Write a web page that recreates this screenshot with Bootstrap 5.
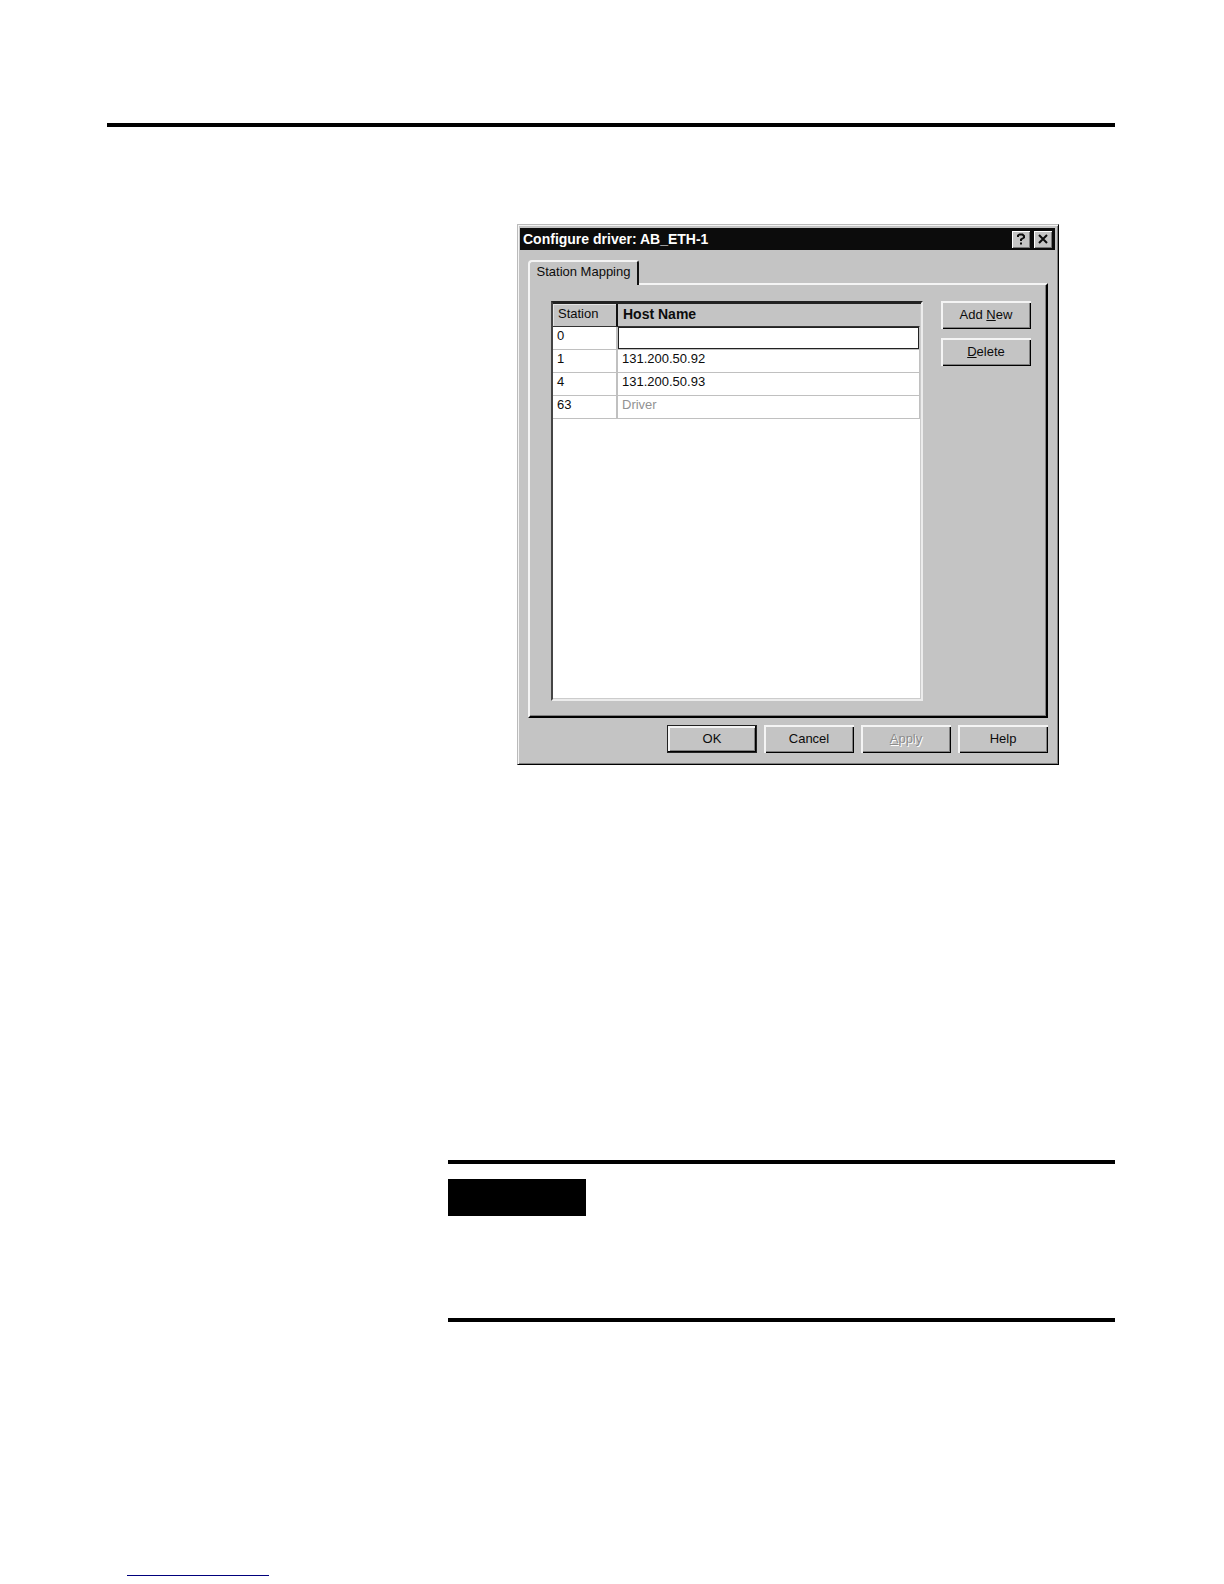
<!DOCTYPE html>
<html lang="en">
<head>
<meta charset="utf-8">
<meta name="viewport" content="width=device-width, initial-scale=1">
<title>Configure driver: AB_ETH-1</title>
<link rel="stylesheet" href="https://cdn.jsdelivr.net/npm/bootstrap@5.3.0/dist/css/bootstrap.min.css">
<style>
  :root { --face: #c4c4c4; --lite: #f4f4f4; --shade: #808080; --ink: #0c0c0c; }
  body { background: #fff; color: var(--ink); font: 13px/18px "Liberation Sans", Arial, sans-serif; }
  .sheet { padding: 123px 109px 8px 107px; }
  .rule { height: 4px; background: #000; }
  .sheet-body { padding-left: 341px; }

  .win { max-width: 542px; margin: 97px 0 395px 69px; background: var(--face);
    border: 1px solid; border-color: #bbb #000 #000 #bbb;
    box-shadow: inset 1px 1px var(--lite), inset -1px -1px var(--shade); }
  .win-title { height: 22px; margin: 3px 3px 0 2px; padding: 0 3px; background: var(--ink); color: #fff; }
  .win-title h1 { font-size: 14px; line-height: 22px; font-weight: 700; }
  .win-body { padding: 10px 10px 11px 10px; }

  .btn-face, .btn-cap { background: var(--face); color: var(--ink); border: 0; border-radius: 0; padding: 0;
    box-shadow: inset 2px 2px var(--lite), inset -1px -1px #000, inset -2px -2px var(--shade); }
  .btn-face { width: 90px; height: 28px; font-size: 13px; line-height: 28px; }
  .btn-face:disabled { color: #8c8c8c; text-shadow: 1px 1px #fff; opacity: 1; }
  .btn-default { box-shadow: inset 0 0 0 1px #222, inset -2px -2px #000, inset 3px 3px var(--lite), inset -3px -3px var(--shade); }
  .btn-cap { width: 18px; height: 17px; box-shadow: inset 1px 1px #fff, inset -1px -1px #777; }
  .side-buttons { gap: 9px; margin-left: 18px; }
  .win-actions { gap: 7px; margin-top: 7px; }

  .tab-face { height: 25px; width: 111px; margin-bottom: -2px; padding: 0 0 3px; background: var(--face);
    color: var(--ink); border: 2px solid; border-color: var(--lite) #111 transparent var(--lite); border-bottom: 0;
    border-radius: 4px 3px 0 0; line-height: 20px; font-size: 13px; }
  .pane { padding: 16px 15px 15px 21px; border: 2px solid; border-color: var(--lite) #000 #000 var(--lite);
    box-shadow: inset -1px -1px var(--shade); }
  .sunken { height: 400px; background: #fff; border: 2px solid; border-color: #222 #ececec #ececec #444;
    box-shadow: inset 0 1px #222, inset -1px -1px #ccc; padding: 1px 1px 0 0; }

  .grid-table { border-collapse: separate; border-spacing: 0; table-layout: fixed; }
  .grid-table th, .grid-table td { height: 23px; padding: 0 0 4px 4px; vertical-align: top; font-weight: 400; line-height: 17px;
    border-right: 1px solid #c0c0c0; border-bottom: 1px solid #c0c0c0; overflow: hidden; }
  .grid-table tr > :first-child { width: 65px; border-right-width: 2px; }
  .grid-table thead th { background: var(--face); line-height: 20px; padding: 0 0 0 5px; border-bottom-color: #333; }
  .grid-table thead th:first-child { border-right-color: #111; box-shadow: inset 1px 1px #e4e4e4; }
  .grid-table thead th:last-child { font-size: 14px; font-weight: 700; border-right-color: var(--face); }
  .grid-table td.edit { padding: 0; }
  .edit input { display: block; width: 100%; height: 22px; border: 1px solid #222; border-radius: 0; padding: 0 4px; background: #fff; outline: 0; }
  .dim { color: #929292; }

  .label-block { width: 138px; height: 37px; margin: 15px 0 102px; background: #000; }
  .foot-rule { width: 142px; height: 1px; margin-left: 20px; background: #00007c; }
</style>
</head>
<body>
<div class="sheet min-vh-100 d-flex flex-column">
  <div class="rule"></div>
  <main class="sheet-body">
    <section class="win" aria-labelledby="winTitle">
      <header class="win-title d-flex align-items-center justify-content-between">
        <h1 id="winTitle" class="m-0">Configure driver: AB_ETH-1</h1>
        <div class="d-flex gap-1">
          <button type="button" class="btn-cap d-flex align-items-center justify-content-center" aria-label="Help">
            <svg width="10" height="12" viewBox="0 0 10 12" fill="none" stroke="#0c0c0c" stroke-width="2"><path d="M2 4V2.500L3.500 1.500H6.500L8 3V4.500L5 6.500V8M5 9.500V11.500"/></svg>
          </button>
          <button type="button" class="btn-cap d-flex align-items-center justify-content-center" aria-label="Close">
            <svg width="10" height="10" viewBox="0 0 10 10" stroke="#0c0c0c" stroke-width="2"><path d="M1 1L9 9M9 1L1 9"/></svg>
          </button>
        </div>
      </header>
      <div class="win-body">
        <div class="d-flex" role="tablist">
          <button type="button" class="tab-face position-relative" role="tab" id="tabMap" aria-selected="true" aria-controls="paneMap">Station Mapping</button>
        </div>
        <div class="pane d-flex align-items-start" id="paneMap" role="tabpanel" aria-labelledby="tabMap">
          <div class="sunken flex-grow-1">
            <table class="grid-table w-100">
              <thead><tr><th scope="col">Station</th><th scope="col">Host Name</th></tr></thead>
              <tbody>
                <tr><td>0</td><td class="edit"><input type="text" aria-label="Host name for station 0"></td></tr>
                <tr><td>1</td><td>131.200.50.92</td></tr>
                <tr><td>4</td><td>131.200.50.93</td></tr>
                <tr><td>63</td><td class="dim">Driver</td></tr>
              </tbody>
            </table>
          </div>
          <div class="side-buttons d-flex flex-column">
            <button type="button" class="btn-face">Add <u>N</u>ew</button>
            <button type="button" class="btn-face"><u>D</u>elete</button>
          </div>
        </div>
        <div class="win-actions d-flex justify-content-end">
          <button type="button" class="btn-face btn-default">OK</button>
          <button type="button" class="btn-face">Cancel</button>
          <button type="button" class="btn-face" disabled><u>A</u>pply</button>
          <button type="button" class="btn-face">Help</button>
        </div>
      </div>
    </section>
    <div class="rule"></div>
    <div class="label-block"></div>
    <div class="rule"></div>
  </main>
  <footer class="mt-auto"><div class="foot-rule"></div></footer>
</div>
<script src="https://cdn.jsdelivr.net/npm/bootstrap@5.3.0/dist/js/bootstrap.bundle.min.js"></script>
</body>
</html>
